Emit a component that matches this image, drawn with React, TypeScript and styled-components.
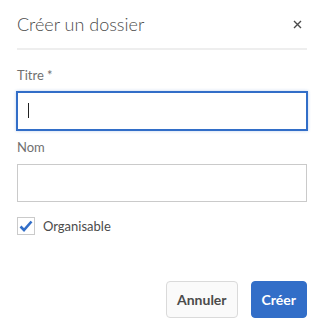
import styled, { createGlobalStyle } from 'styled-components'

const GlobalStyle = createGlobalStyle`
  body {
    margin: 0;
    background: #ffffff;
    font-family: Lato, 'Open Sans', sans-serif;
  }
`

const Dialog = styled.div`
  width: 324px;
  height: 332px;
  box-sizing: border-box;
  padding: 0 17px;
  display: flex;
  flex-direction: column;
  background: #ffffff;
`

const Header = styled.div`
  display: flex;
  align-items: center;
  justify-content: space-between;
  height: 48px;
  border-bottom: 2px solid #eeeeee;
`

const Title = styled.h1`
  margin: 0 0 1px;
  font-size: 18px;
  font-weight: 300;
  color: #4b4b4b;
`

const CloseButton = styled.button`
  border: none;
  background: none;
  padding: 0;
  margin-right: 4px;
  width: 12px;
  height: 12px;
  display: flex;
  align-items: center;
  justify-content: center;
  cursor: pointer;
`

const Field = styled.div<{ $top: number }>`
  display: flex;
  flex-direction: column;
  margin-top: ${(p) => p.$top}px;
`

const Label = styled.label`
  font-size: 13px;
  color: #707070;
  line-height: 18px;
  margin-bottom: 8px;
`

const Input = styled.input<{ $focused?: boolean }>`
  box-sizing: border-box;
  height: 38px;
  width: 100%;
  padding: 0 10px;
  font-family: inherit;
  font-size: 14px;
  color: #4b4b4b;
  background: #ffffff;
  border: 1px solid ${(p) => (p.$focused ? '#326ec8' : '#cacaca')};
  box-shadow: ${(p) =>
    p.$focused ? '0 0 0 1px #326ec8, 0 0 3px 1px rgba(50,110,200,0.3)' : 'none'};
  outline: none;
  border-radius: 0;
`

const InputWrap = styled.div`
  position: relative;
`

const Cursor = styled.span`
  position: absolute;
  left: 11px;
  top: 11px;
  width: 1px;
  height: 15px;
  background: #222222;
`

const CheckRow = styled.label`
  display: flex;
  align-items: center;
  gap: 8px;
  margin-top: 15px;
  font-size: 13px;
  color: #4b4b4b;
`

const CheckBox = styled.span`
  box-sizing: border-box;
  width: 18px;
  height: 18px;
  border: 1px solid #cacaca;
  display: flex;
  align-items: center;
  justify-content: center;
  background: #ffffff;
`

const Footer = styled.div`
  margin-top: auto;
  margin-bottom: 14px;
  display: flex;
  justify-content: flex-end;
  gap: 13px;
`

const Button = styled.button<{ $primary?: boolean }>`
  height: 37px;
  padding: 0 10px;
  border-radius: 4px;
  font-family: inherit;
  font-size: 14px;
  font-weight: 700;
  cursor: pointer;
  border: 1px solid ${(p) => (p.$primary ? '#326ec8' : '#dadada')};
  background: ${(p) => (p.$primary ? '#326ec8' : '#fafafa')};
  color: ${(p) => (p.$primary ? '#ffffff' : '#4b4b4b')};
`

export default function App() {
  return (
    <>
      <GlobalStyle />
      <Dialog>
        <Header>
          <Title>Créer un dossier</Title>
          <CloseButton aria-label='Fermer'>
            <svg width='9' height='9' viewBox='0 0 9 9'>
              <path d='M1 1 L8 8 M8 1 L1 8' stroke='#4b4b4b' strokeWidth='1.4' />
            </svg>
          </CloseButton>
        </Header>
        <Field $top={16}>
          <Label>Titre *</Label>
          <InputWrap>
            <Input $focused />
            <Cursor />
          </InputWrap>
        </Field>
        <Field $top={8}>
          <Label>Nom</Label>
          <Input />
        </Field>
        <CheckRow>
          <CheckBox>
            <svg width='14' height='12' viewBox='0 0 14 12'>
              <path d='M1.5 6.5 L5 10 L12.5 1.5' fill='none' stroke='#326ec8' strokeWidth='2.6' />
            </svg>
          </CheckBox>
          Organisable
        </CheckRow>
        <Footer>
          <Button>Annuler</Button>
          <Button $primary>Créer</Button>
        </Footer>
      </Dialog>
    </>
  )
}
